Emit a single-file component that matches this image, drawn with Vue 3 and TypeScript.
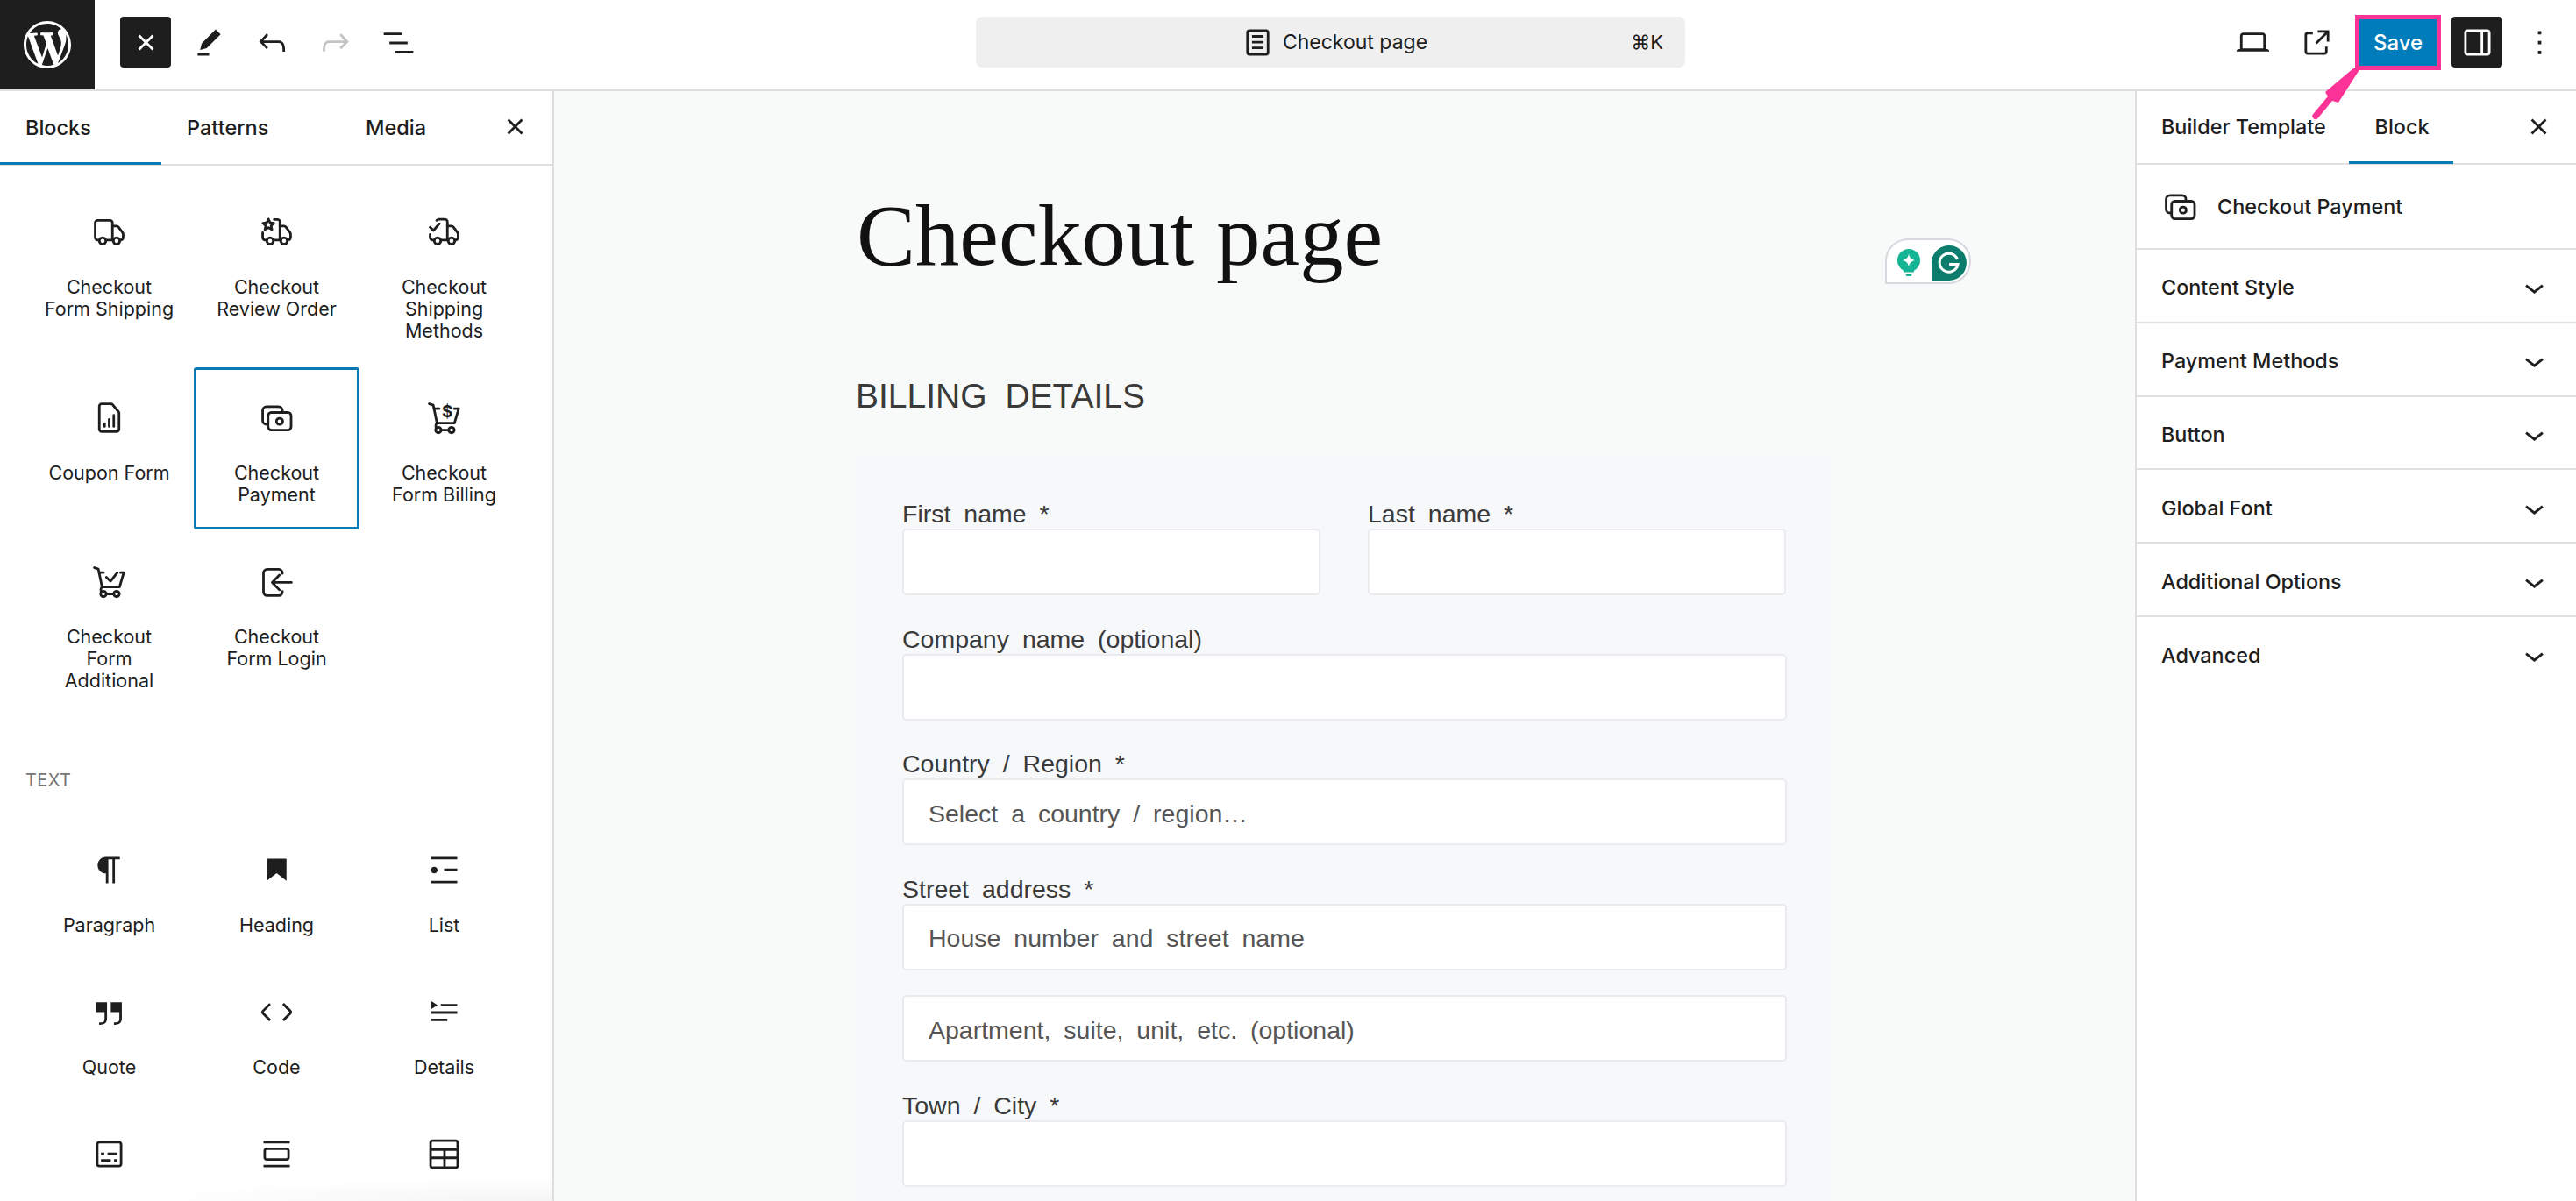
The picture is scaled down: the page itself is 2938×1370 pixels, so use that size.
<script setup lang="ts">
import { h } from 'vue'

type IconDef = { f?: string[]; s?: string[]; t?: string }

const circle = (x: number, y: number, r: number): string =>
  `M${x - r} ${y}a${r} ${r} 0 1 1 ${r * 2} 0a${r} ${r} 0 1 1 ${-r * 2} 0`

const cartBase = [circle(8.5, 19.5, 1.7), circle(16.5, 19.5, 1.7), 'M10.2 19.5h4.6']

const icons: Record<string, IconDef> = {
  close: { f: ['M12 13.06l3.712 3.713 1.061-1.06L13.061 12l3.712-3.712-1.06-1.06L12 10.938 8.288 7.227l-1.061 1.06L10.939 12l-3.712 3.712 1.06 1.061L12 13.061z'] },
  edit: { f: ['m19 7-3-3-8.5 8.5-1 4 4-1L19 7Zm-7 11.5H5V20h7v-1.5Z'] },
  undo: { f: ['M18.3 11.7c-.6-.6-1.4-.9-2.3-.9H6.7l2.9-3.3-1.1-1-4.5 5L8.5 16l1-1-2.7-2.7H16c.5 0 .9.2 1.3.5 1 1 1 3.4 1 4.5v.3h1.5v-.2c0-1.5 0-4.3-1.5-5.7z'] },
  redo: { f: ['M15.6 6.5l-1.1 1 2.9 3.3H8c-.9 0-1.7.3-2.3.9-1.4 1.5-1.4 4.2-1.4 5.6v.2h1.5v-.3c0-1.1 0-3.5 1-4.5.3-.3.7-.5 1.3-.5h9.2L14.5 15l1.1 1.1 4.6-4.6-4.6-5z'] },
  listView: { f: ['M3 6h11v1.5H3V6Zm3.5 5.5h11V13h-11v-1.5ZM21 17H10v1.5h11V17Z'] },
  laptop: { f: ['M20.5 16h-.7V8c0-1.1-.9-2-2-2H6.2c-1.1 0-2 .9-2 2v8h-.7c-.8 0-1.5.7-1.5 1.5h20c0-.8-.7-1.5-1.5-1.5zM5.7 8c0-.3.2-.5.5-.5h11.6c.3 0 .5.2.5.5v7.6H5.7V8z'] },
  external: { f: ['M19.5 4.5h-7V6h4.44l-5.97 5.97 1.06 1.06L18 7.06v4.44h1.5v-7Zm-13 1a2 2 0 0 0-2 2v10a2 2 0 0 0 2 2h10a2 2 0 0 0 2-2v-3H17v3a.5.5 0 0 1-.5.5h-10a.5.5 0 0 1-.5-.5v-10a.5.5 0 0 1 .5-.5h3V5.5h-3Z'] },
  drawer: { f: ['M18 4H6c-1.1 0-2 .9-2 2v12c0 1.1.9 2 2 2h12c1.1 0 2-.9 2-2V6c0-1.1-.9-2-2-2zm-4 14.5H6c-.3 0-.5-.2-.5-.5V6c0-.3.2-.5.5-.5h8v13zm4.5-.5c0 .3-.2.5-.5.5h-2.5v-13H18c.3 0 .5.2.5.5v12z'] },
  more: { f: ['M13 19h-2v-2h2v2zm0-6h-2v-2h2v2zm0-6h-2V5h2v2z'] },
  chevron: { f: ['M17.5 11.6L12 16l-5.5-4.4.9-1.2L12 14l4.5-3.6 1 1.2z'] },
  page: { f: ['M15.5 7.5h-7V9h7V7.5Zm-7 3.5h7v1.5h-7V11Zm7 3.5h-7V16h7v-1.5Z', 'M17 4H7a2 2 0 0 0-2 2v12a2 2 0 0 0 2 2h10a2 2 0 0 0 2-2V6a2 2 0 0 0-2-2ZM7 5.5h10a.5.5 0 0 1 .5.5v12a.5.5 0 0 1-.5.5H7a.5.5 0 0 1-.5-.5V6a.5.5 0 0 1 .5-.5Z'] },
  truck: { s: ['M5.9 17H5A1.5 1.5 0 0 1 3.5 15.5V6.5A1.5 1.5 0 0 1 5 5h7.5A1.5 1.5 0 0 1 14 6.5V17h-3.9', 'M14 8.5h2.5a1.5 1.5 0 0 1 1.2.6l2.5 3.4a1.5 1.5 0 0 1 .3.9v2.1a1.5 1.5 0 0 1-1.5 1.5h-.6M14 17h.4', circle(8, 17.5, 2), circle(16.5, 17.5, 2)] },
  truckStar: { s: ['M7 4.2l1 2.2 2.3.3-1.7 1.6.5 2.3-2.1-1.2-2.1 1.2.5-2.3L3.7 6.7l2.3-.3z', 'M10.5 4.5h2A1.5 1.5 0 0 1 14 6v11h-3.9', 'M3.5 12.5v3A1.5 1.5 0 0 0 5 17h.9', 'M14 8.5h2.5a1.5 1.5 0 0 1 1.2.6l2.5 3.4a1.5 1.5 0 0 1 .3.9v2.1a1.5 1.5 0 0 1-1.5 1.5h-.6M14 17h.4', circle(8, 17.5, 2), circle(16.5, 17.5, 2)] },
  truckCheck: { s: ['M3.5 9.2l2 2 3.6-4.2', 'M7.5 5l1-.7h4A1.5 1.5 0 0 1 14 5.8V17h-3.9', 'M3.5 13.5v2A1.5 1.5 0 0 0 5 17h.9', 'M14 8.5h2.5a1.5 1.5 0 0 1 1.2.6l2.5 3.4a1.5 1.5 0 0 1 .3.9v2.1a1.5 1.5 0 0 1-1.5 1.5h-.6M14 17h.4', circle(8, 17.5, 2), circle(16.5, 17.5, 2)] },
  coupon: { s: ['M7.5 3.5h5.7a1 1 0 0 1 .7.3l3.8 4.6a1 1 0 0 1 .3.7V19a1.5 1.5 0 0 1-1.5 1.5h-9A1.5 1.5 0 0 1 6 19V5a1.5 1.5 0 0 1 1.5-1.5z', 'M9.2 15.5v1.8M12 13v4.3M14.8 10.5v6.8'] },
  payment: { s: ['M6.3 16H5.8a2.3 2.3 0 0 1-2.3-2.3V7.6a2.3 2.3 0 0 1 2.3-2.3h7.4a2.3 2.3 0 0 1 2.3 2.3v.8', 'M8.8 8.8h10a2 2 0 0 1 2 2v6.7a2 2 0 0 1-2 2h-10a2 2 0 0 1-2-2v-6.7a2 2 0 0 1 2-2z', circle(13.8, 14.2, 1.9)] },
  cartPay: { s: ['M3 3.5l2.4.8 2.3 11h10.6l2.6-8.8h-2.7', 'M6 6.5h3', ...cartBase, 'M7.700 15.300c-.9.4-1 2.300-.3 3'], t: '$' },
  cartCheck: { s: ['M3 3.5l2.4.8 2.3 11h10.6l2.6-8.8h-2', 'M6 6.5h2.5', 'M10.3 9.3l2.5 2.5 4.2-5.3', ...cartBase, 'M7.700 15.300c-.9.4-1 2.300-.3 3'] },
  login: { s: ['M15.5 7V6.7A2.2 2.2 0 0 0 13.3 4.5H6.2A2.2 2.2 0 0 0 4 6.7v11.6a2.2 2.2 0 0 0 2.2 2.2h7.1a2.2 2.2 0 0 0 2.2-2.2V18', 'M21 12.5H9.5M13.7 8l-4.4 4.5 4.4 4.5'] },
  paragraph: { f: ['m9.99609 14v-.2251l.00391.0001v6.225h1.5v-14.5h2.5v14.5h1.5v-14.5h3v-1.5h-8.50391c-2.76142 0-5 2.23858-5 5 0 2.7614 2.23858 5 5 5z'] },
  heading: { f: ['M6 5V18.5911L12 13.8473L18 18.5911V5H6Z'] },
  list: { f: ['M4 4v1.5h16V4H4zm8 8.5h8V11h-8v1.5zM4 20h16v-1.5H4V20zm4-8c0-1.1-.9-2-2-2s-2 .9-2 2 .9 2 2 2 2-.9 2-2z'] },
  quote: { f: ['M13 6v6h5.2v4c0 .8-.2 1.4-.5 1.7-.6.6-1.6.6-2.5.5h-.3v1.5h.5c1 0 2.3-.1 3.3-1 .6-.6 1-1.6 1-2.8V6H13zm-9 6h5.2v4c0 .8-.2 1.4-.5 1.7-.6.6-1.6.6-2.5.5h-.3v1.5h.5c1 0 2.3-.1 3.3-1 .6-.6 1-1.6 1-2.8V6H4v6z'] },
  code: { f: ['M20.8 10.7l-4.3-4.3-1.1 1.1 4.3 4.3c.1.1.1.3 0 .4l-4.3 4.3 1.1 1.1 4.3-4.3c.7-.8.7-1.9 0-2.6zM4.2 11.8l4.3-4.3-1-1-4.3 4.3c-.7.7-.7 1.8 0 2.5l4.3 4.3 1.1-1.1-4.3-4.3c-.2-.1-.2-.3-.1-.4z'] },
  details: { f: ['M4 16h10v1.5H4V16Zm0-4.5h16V13H4v-1.5ZM10 7h10v1.5H10V7Z', 'm4 5.25 4 2.5-4 2.5v-5Z'] },
  pre: { f: ['M18 4H6c-1.1 0-2 .9-2 2v12c0 1.1.9 2 2 2h12c1.1 0 2-.9 2-2V6c0-1.1-.9-2-2-2zm.5 14c0 .3-.2.5-.5.5H6c-.3 0-.5-.2-.5-.5V6c0-.3.2-.5.5-.5h12c.3 0 .5.2.5.5v12zM7 16.5h6V15H7v1.5zm4-4h6V11h-6v1.5zM9 11H7v1.5h2V11zm6 5.5h2V15h-2v1.5z'] },
  pull: { f: ['M18 8H6c-1.1 0-2 .9-2 2v4c0 1.1.9 2 2 2h12c1.1 0 2-.9 2-2v-4c0-1.1-.9-2-2-2zm.5 6c0 .3-.2.5-.5.5H6c-.3 0-.5-.2-.5-.5v-4c0-.3.2-.5.5-.5h12c.3 0 .5.2.5.5v4zM4 4v1.5h16V4H4zm0 16h16v-1.5H4V20z'] },
  table: { f: ['M19 3H5c-1.1 0-2 .9-2 2v14c0 1.1.9 2 2 2h14c1.1 0 2-.9 2-2V5c0-1.1-.9-2-2-2zM5 4.5h14c.3 0 .5.2.5.5v3.5h-15V5c0-.3.2-.5.5-.5zm8 5.500h6.500v3.500H13V10zm-1.500 3.500h-7V10h7v3.500zm-7 5.500v-4h7v4.500H5c-.3 0-.5-.2-.5-.5zm14.500.5h-6V15h6.500v4c0 .3-.2.5-.5.5z'] },
}

const Icon = (props: { name: string }) => {
  const def = icons[props.name]
  const kids = [
    ...(def.f ?? []).map((d) => h('path', { d, fill: 'currentColor' })),
    ...(def.s ?? []).map((d) =>
      h('path', { d, fill: 'none', stroke: 'currentColor', 'stroke-width': 1.5, 'stroke-linecap': 'round', 'stroke-linejoin': 'round' }),
    ),
  ]
  if (def.t) {
    kids.push(h('text', { x: 14, y: 11.5, 'font-size': 10, 'font-weight': 700, 'text-anchor': 'middle', 'font-family': 'Inter, sans-serif', fill: 'currentColor' }, def.t))
  }
  return h('svg', { width: 45, height: 45, viewBox: '0 0 24 24', style: 'display:block;flex:none' }, kids)
}
Icon.props = ['name']

const wooBlocks = [
  { label: ['Checkout', 'Form Shipping'], icon: 'truck' },
  { label: ['Checkout', 'Review Order'], icon: 'truckStar' },
  { label: ['Checkout', 'Shipping', 'Methods'], icon: 'truckCheck' },
  { label: ['Coupon Form'], icon: 'coupon' },
  { label: ['Checkout', 'Payment'], icon: 'payment', selected: true },
  { label: ['Checkout', 'Form Billing'], icon: 'cartPay' },
  { label: ['Checkout', 'Form', 'Additional'], icon: 'cartCheck' },
  { label: ['Checkout', 'Form Login'], icon: 'login' },
]
const textBlocks = [
  { label: ['Paragraph'], icon: 'paragraph' },
  { label: ['Heading'], icon: 'heading' },
  { label: ['List'], icon: 'list' },
  { label: ['Quote'], icon: 'quote' },
  { label: ['Code'], icon: 'code' },
  { label: ['Details'], icon: 'details' },
  { label: [] as string[], icon: 'pre' },
  { label: [] as string[], icon: 'pull' },
  { label: [] as string[], icon: 'table' },
]
const sections = ['Content Style', 'Payment Methods', 'Button', 'Global Font', 'Additional Options', 'Advanced']
</script>

<template>
  <div class="app">
    <header class="topbar">
      <div class="logo">
        <svg width="54" height="54" viewBox="0 0 20 20"><path fill="#fff" d="M20 10c0-5.51-4.49-10-10-10C4.48 0 0 4.49 0 10c0 5.52 4.48 10 10 10 5.51 0 10-4.48 10-10zM7.78 15.37L4.37 6.22c.55-.02 1.17-.08 1.17-.08.5-.06.44-1.13-.06-1.11 0 0-1.45.11-2.37.11-.18 0-.37 0-.58-.01C4.12 2.69 6.87 1.11 10 1.11c2.33 0 4.45.87 6.05 2.34-.68-.11-1.65.39-1.65 1.58 0 .74.45 1.36.9 2.1.35.61.55 1.36.55 2.46 0 1.49-1.4 5-1.4 5l-3.03-8.37c.54-.02.82-.17.82-.17.5-.05.44-1.25-.06-1.22 0 0-1.44.12-2.38.12-.87 0-2.33-.12-2.33-.12-.5-.03-.56 1.2-.06 1.22l.92.08 1.26 3.41zM17.41 10c.24-.64.74-1.87.43-4.25.7 1.29 1.05 2.71 1.05 4.25 0 3.29-1.73 6.24-4.4 7.78.97-2.59 1.94-5.2 2.92-7.78zM6.1 18.09C3.12 16.65 1.11 13.53 1.11 10c0-1.3.23-2.48.72-3.59C3.25 10.3 4.67 14.2 6.1 18.09zm4.03-6.63l2.58 6.98c-.86.29-1.76.45-2.71.45-.79 0-1.57-.11-2.29-.33.81-2.38 1.62-4.74 2.42-7.1z"/></svg>
      </div>
      <div class="tools">
        <div class="tool dark"><Icon name="close" /></div>
        <div class="tool"><Icon name="edit" /></div>
        <div class="tool"><Icon name="undo" /></div>
        <div class="tool faded"><Icon name="redo" /></div>
        <div class="tool"><Icon name="listView" /></div>
      </div>
      <div class="command">
        <span></span>
        <div class="command-title"><Icon name="page" /><span>Checkout page</span></div>
        <span class="shortcut">⌘K</span>
      </div>
      <div class="actions">
        <div class="tool"><Icon name="laptop" /></div>
        <div class="tool"><Icon name="external" /></div>
        <div class="save">Save</div>
        <div class="tool dark"><Icon name="drawer" /></div>
        <div class="tool more"><Icon name="more" /></div>
      </div>
    </header>

    <main class="body">
      <aside class="inserter">
        <div class="tabs">
          <div class="tab first active">Blocks</div>
          <div class="tab second">Patterns</div>
          <div class="tab third">Media</div>
          <div class="tab-close"><Icon name="close" /></div>
        </div>
        <div class="grid">
          <div v-for="b in wooBlocks" :key="b.label.join()" class="block" :class="{ selected: b.selected }">
            <Icon :name="b.icon" />
            <div class="block-label"><div v-for="line in b.label" :key="line">{{ line }}</div></div>
          </div>
        </div>
        <div class="group-title">TEXT</div>
        <div class="grid">
          <div v-for="b in textBlocks" :key="b.icon" class="block">
            <Icon :name="b.icon" />
            <div class="block-label"><div v-for="line in b.label" :key="line">{{ line }}</div></div>
          </div>
        </div>
      </aside>

      <section class="canvas">
        <div class="page">
          <h1 class="title">Checkout page</h1>
          <h3 class="billing">BILLING DETAILS</h3>
          <div class="form">
            <div class="pair">
              <div><label>First name *</label><div class="input"></div></div>
              <div><label>Last name *</label><div class="input"></div></div>
            </div>
            <div class="field"><label>Company name (optional)</label><div class="input"></div></div>
            <div class="field"><label>Country / Region *</label><div class="input">Select a country / region…</div></div>
            <div class="field"><label>Street address *</label><div class="input">House number and street name</div></div>
            <div class="input extra">Apartment, suite, unit, etc. (optional)</div>
            <div class="field"><label>Town / City *</label><div class="input"></div></div>
          </div>
        </div>
        <div class="grammarly">
          <svg width="94" height="48" viewBox="0 0 94 48">
            <circle cx="25" cy="23" r="13" fill="#15b494" />
            <path d="M25 15.5c.7 4.3 2.7 6.5 7 7.5-4.3 1-6.3 3.200-7 7.500-.7-4.300-2.700-6.500-7-7.500 4.300-1 6.300-3.200 7-7.500z" fill="#fff" />
            <path d="M19 33h12v3.500H19z" fill="#15b494" />
            <path d="M21 38.500h8l-1.500 2.500h-5z" fill="#15b494" />
            <path d="M51 46V24a20 20 0 1 1 20 22z" fill="#0c7d6c" />
            <path d="M80.500 22a10.500 10.500 0 1 0 .5 5.500H71" fill="none" stroke="#fff" stroke-width="3" />
          </svg>
        </div>
      </section>

      <aside class="sidebar">
        <div class="side-tabs">
          <div class="side-tab builder">Builder Template</div>
          <div class="side-tab block-tab">Block</div>
          <div class="side-close"><Icon name="close" /></div>
        </div>
        <div class="card">
          <Icon name="payment" />
          <span>Checkout Payment</span>
        </div>
        <div v-for="s in sections" :key="s" class="row">
          <span>{{ s }}</span>
          <Icon name="chevron" />
        </div>
      </aside>
    </main>

    <svg class="arrow" width="60" height="64" viewBox="0 0 60 64">
      <path d="M47 2 L55 2 L30 41 L23 39 L6.500 59 A3.500 3.500 0 0 1 1.300 54 L18 34 L15 29 Z" fill="#fb3396" />
    </svg>
  </div>
</template>

<style scoped>
.app {
  position: relative;
  width: 2938px;
  height: 1370px;
  overflow: hidden;
  background: #fff;
  color: #1e1e1e;
  font-family: Inter, "DejaVu Sans", sans-serif;
}
.topbar {
  display: flex;
  align-items: center;
  height: 104px;
  box-sizing: border-box;
  border-bottom: 2px solid #dedede;
}
.logo {
  display: flex;
  align-items: center;
  justify-content: center;
  width: 108px;
  height: 102px;
  background: #1e1e1e;
  flex: none;
}
.tools {
  display: flex;
  gap: 14px;
  margin: 0 0 6px 29px;
}
.tool {
  display: flex;
  align-items: center;
  justify-content: center;
  width: 58px;
  height: 58px;
  border-radius: 4px;
}
.tool.dark {
  background: #1e1e1e;
  color: #fff;
}
.tool.faded {
  color: #c4c4c4;
}
.command {
  display: grid;
  grid-template-columns: 1fr auto 1fr;
  align-items: center;
  width: 809px;
  height: 58px;
  margin: 0 0 6px 630px;
  padding: 0 25px 0 30px;
  box-sizing: border-box;
  background: #efefef;
  border-radius: 8px;
  font-size: 23px;
}
.command-title {
  display: flex;
  align-items: center;
  gap: 6px;
}
.shortcut {
  text-align: right;
  font-size: 22px;
}
.actions {
  display: flex;
  align-items: center;
  margin: 0 0 6px auto;
  padding-right: 13px;
  gap: 15px;
}
.more {
  margin-left: -2px;
}
.save {
  display: flex;
  align-items: center;
  justify-content: center;
  width: 98px;
  height: 63px;
  box-sizing: border-box;
  border: 5px solid #fb3396;
  background: #007cba;
  color: #fff;
  font-size: 24px;
  font-weight: 500;
  margin-right: -3px;
}
.body {
  display: flex;
  height: 1266px;
}
.inserter {
  width: 632px;
  flex: none;
  box-sizing: border-box;
  border-right: 2px solid #dedede;
  overflow: hidden;
  background: radial-gradient(ellipse 480px 26px at 100% 100%, #f5f5f5, #fff);
}
.tabs {
  display: flex;
  align-items: center;
  height: 85px;
  position: relative;
  border-bottom: 2px solid #e0e0e0;
  box-sizing: border-box;
  font-size: 23.5px;
  font-weight: 500;
}
.tab {
  box-sizing: border-box;
  height: 85px;
  line-height: 85px;
  padding-left: 29px;
}
.tab.first {
  width: 184px;
}
.tab.second {
  width: 204px;
}
.tab.third {
  flex: 1;
}
.tab.active {
  border-bottom: 3px solid #0a7ab5;
}
.tab-close {
  margin-right: 20px;
  margin-top: -2px;
}
.grid {
  display: grid;
  grid-template-columns: repeat(3, 191px);
  padding: 17px 29px 0;
}
.group-title {
  margin: 63px 0 0 29px;
  font-size: 20px;
  line-height: 20px;
  letter-spacing: 0.4px;
  color: #757575;
}
.group-title + .grid {
  padding-top: 34px;
}
.block {
  display: flex;
  flex-direction: column;
  align-items: center;
  margin: 1px;
  padding: 35px 0 27px;
  min-height: 160px;
  box-sizing: border-box;
  border-radius: 3px;
}
.block.selected {
  outline: 3px solid #0a7ab5;
  outline-offset: -3px;
}
.block-label {
  margin-top: 28px;
  font-size: 21.5px;
  line-height: 25px;
  text-align: center;
  color: #1e1e1e;
}
.canvas {
  position: relative;
  flex: 1;
  background: #f8f9f9;
  overflow: hidden;
}
.page {
  width: 1116px;
  margin-left: 342px;
}
.title {
  margin: 0 0 0 3px;
  padding-top: 114px;
  font-family: "Liberation Serif", serif;
  font-weight: 400;
  font-size: 100.5px;
  line-height: 100px;
  color: #111;
}
.billing {
  margin: 112px 0 0 2px;
  font-family: "Liberation Sans", sans-serif;
  font-weight: 400;
  font-size: 39px;
  line-height: 44px;
  word-spacing: 10px;
  color: #3a3a3a;
}
.form {
  margin-top: 45px;
  padding: 48px 52px 60px 55px;
  background: #f7f8fa;
  font-family: "Liberation Sans", sans-serif;
  font-size: 28.5px;
  color: #3a3a3a;
}
.pair {
  display: grid;
  grid-template-columns: 477px 477px;
  gap: 54px;
}
.field {
  margin-top: 30.5px;
}
.field label,
.pair label {
  display: block;
  height: 36px;
  line-height: 38px;
  word-spacing: 7px;
}
.input {
  display: flex;
  align-items: center;
  height: 76px;
  box-sizing: border-box;
  padding: 4px 0 0 28px;
  background: #fff;
  border: 2px solid #e9ebee;
  border-radius: 5px;
  color: #555;
  word-spacing: 7px;
}
.extra {
  margin-top: 28.5px;
}
.grammarly {
  position: absolute;
  left: 1518px;
  top: 168px;
  width: 98px;
  height: 52px;
  box-sizing: border-box;
  border: 2px solid #d6d9df;
  border-radius: 26px 26px 26px 0;
  background: #fff;
}
.sidebar {
  width: 503px;
  flex: none;
  box-sizing: border-box;
  border-left: 2px solid #dedede;
  font-size: 23.4px;
  font-weight: 500;
}
.side-tabs {
  display: flex;
  align-items: center;
  height: 84px;
  box-sizing: border-box;
  border-bottom: 2px solid #e0e0e0;
}
.side-tab {
  height: 84px;
  line-height: 84px;
  box-sizing: border-box;
}
.builder {
  padding-left: 28px;
  width: 242px;
}
.block-tab {
  width: 119px;
  padding-left: 2px;
  text-align: center;
  border-bottom: 3px solid #0a7ab5;
}
.side-close {
  margin-left: auto;
  margin-right: 20px;
  margin-top: -2px;
}
.card {
  display: flex;
  align-items: center;
  height: 97px;
  box-sizing: border-box;
  padding: 0 0 0 27px;
  gap: 20px;
  border-bottom: 2px solid #e0e0e0;
  color: #1e1e1e;
}
.row {
  display: flex;
  align-items: center;
  justify-content: space-between;
  height: 83.8px;
  box-sizing: border-box;
  padding: 4px 25px 0 28px;
  border-bottom: 2px solid #e0e0e0;
}
.row:last-child {
  border-bottom: 0;
}
.arrow {
  position: absolute;
  left: 2637px;
  top: 76px;
}
</style>
